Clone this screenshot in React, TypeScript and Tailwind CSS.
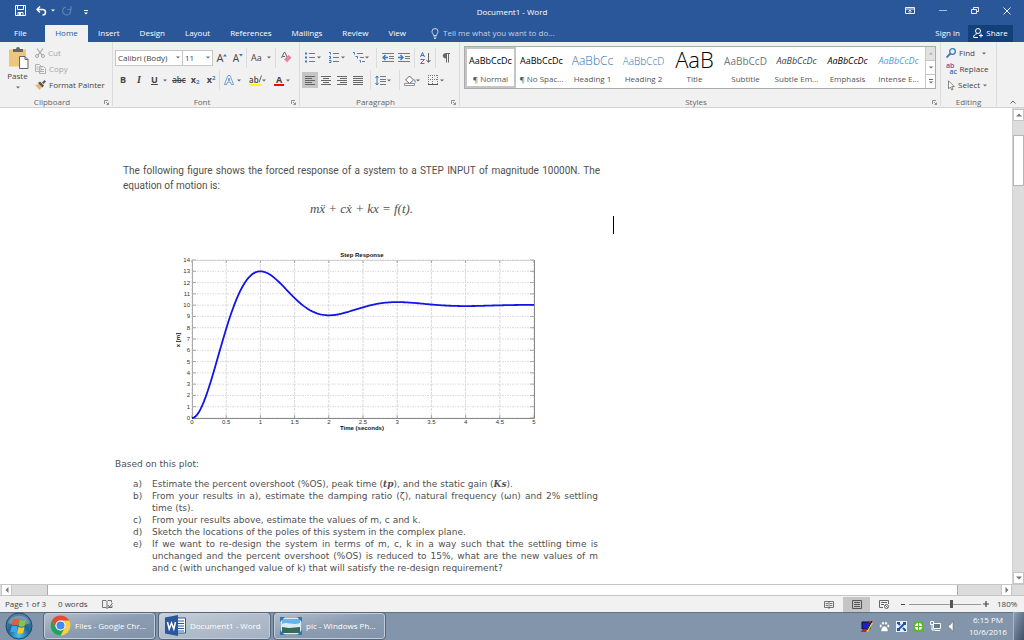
import type { ReactNode } from "react";

interface IconProps {
  w: number;
  h: number;
  children: ReactNode;
}

function Icon({ w, h, children }: IconProps) {
  return (
    <svg width={w} height={h} viewBox={`0 0 ${w} ${h}`} fill="none" className="shrink-0" aria-hidden="true">
      {children}
    </svg>
  );
}

function Caret() {
  return (
    <Icon w={4} h={3}>
      <path d="M0 0.5h4L2 2.5z" fill="#666" />
    </Icon>
  );
}

function Divider() {
  return <span className="h-5 w-px shrink-0 bg-[#dcdcdc]" />;
}

interface ToolProps {
  label: string;
  className: string;
  caret?: boolean;
  children: ReactNode;
}

function Tool({ label, className, caret, children }: ToolProps) {
  return (
    <button
      aria-label={label}
      className={`flex h-4 shrink-0 items-center hover:bg-[#d5d5d5] ${
        caret ? "justify-between px-1" : "justify-center"
      } ${className}`}
    >
      {children}
      {caret && <Caret />}
    </button>
  );
}

interface GroupProps {
  title: string;
  className: string;
  launcher?: boolean;
  children: ReactNode;
}

function Group({ title, className, launcher, children }: GroupProps) {
  return (
    <section className={`flex flex-col border-r border-[#dcdcdc] ${className}`}>
      <div className="flex-1">{children}</div>
      <div className="flex h-2 items-center text-[#666]">
        <span className="flex-1 text-center">{title}</span>
        {launcher && (
          <button aria-label={`${title} settings`} className="mr-[3px]">
            <Icon w={5} h={5}>
              <path d="M0.5 4V0.5H4M2 2l2.500 2.500M4.500 2.500v2h-2" stroke="#777" strokeWidth="0.8" />
            </Icon>
          </button>
        )}
      </div>
    </section>
  );
}

function TitleBar() {
  return (
    <div className="grid h-[25px] grid-cols-[1fr_auto_1fr] items-center">
      <div className="flex items-center pb-1 pl-[15px]">
        <button aria-label="Save">
          <Icon w={11} h={11}>
            <path d="M0.500 0.500h10v10h-10zM2.500 0.500v4h6v-4M3 10.500v-3h5v3" stroke="#fff" />
            <path d="M4 8h2v2.500H4z" fill="#fff" />
          </Icon>
        </button>
        <button aria-label="Undo" className="ml-[10px] flex items-center gap-1">
          <Icon w={11} h={10}>
            <path d="M1 3.500h5.500c4 0 4 5.500 0 5.500M4 0.500l-3 3 3 3" stroke="#fff" strokeWidth="1.500" />
          </Icon>
          <Icon w={4} h={3}>
            <path d="M0 0.500h4l-2 2z" fill="#fff" />
          </Icon>
        </button>
        <button aria-label="Redo" className="ml-[7px]">
          <Icon w={10} h={10}>
            <path d="M4 1A4 4 0 1 0 8.500 4M5.500 3.500h3.500V0" stroke="#5d80b6" strokeWidth="1.200" />
          </Icon>
        </button>
        <button aria-label="Customize toolbar" className="ml-3 mt-1">
          <Icon w={4} h={5}>
            <path d="M0 0.500h4" stroke="#fff" />
            <path d="M0 2.500h4L2 4.500z" fill="#fff" />
          </Icon>
        </button>
      </div>
      <h1 className="pb-[2px] text-white">Document1 - Word</h1>
      <div className="flex items-center justify-end pb-1 pr-[13px]">
        <button aria-label="Ribbon display options" className="mr-6">
          <Icon w={10} h={7}>
            <path d="M0.500 0.500h9v6h-9zM0.500 2h9M5 6V3M3.500 4.500L5 3l1.500 1.500" stroke="#fff" strokeWidth="0.900" />
          </Icon>
        </button>
        <button aria-label="Minimize" className="mr-6">
          <Icon w={8} h={7}>
            <path d="M0 3.500h8" stroke="#a9bedb" />
          </Icon>
        </button>
        <button aria-label="Restore" className="mr-6">
          <Icon w={8} h={7}>
            <path d="M0.500 2.500h5v4h-5zM2.500 2V0.500h5v4H6" stroke="#fff" strokeWidth="0.900" />
          </Icon>
        </button>
        <button aria-label="Close">
          <Icon w={8} h={8}>
            <path d="M0.500 0.500l7 7M7.500 0.500l-7 7" stroke="#fff" strokeWidth="0.900" />
          </Icon>
        </button>
      </div>
    </div>
  );
}

const tabs = ["Insert", "Design", "Layout", "References", "Mailings", "Review", "View"];

function TabBar() {
  return (
    <nav className="flex h-[17px] items-stretch font-medium text-white">
      <button className="w-[45px] pb-px pl-[14px] text-left">File</button>
      <button className="w-[43px] bg-[#f1f1f1] pb-px text-[#2b579a]">Home</button>
      {tabs.map((tab) => (
        <button key={tab} className="px-[10px] pb-px">
          {tab}
        </button>
      ))}
      <label className="ml-[15px] flex flex-1 items-center gap-1 pb-px text-[#c3d0e5]">
        <Icon w={8} h={11}>
          <path d="M2.500 7.500C2.500 6 1 5.500 1 3.500a3 3 0 0 1 6 0C7 5.500 5.500 6 5.500 7.500zM2.500 9h3M3 10.500h2" stroke="#dbe4f1" strokeWidth="0.900" />
        </Icon>
        <input
          aria-label="Tell me"
          placeholder="Tell me what you want to do..."
          className="w-40 bg-transparent outline-none placeholder:text-[#c3d0e5]"
        />
      </label>
      <button className="px-2 pb-px">Sign in</button>
      <button className="mr-[11px] flex w-[45px] items-center justify-center gap-[3px] bg-[#124078] pb-px">
        <Icon w={10} h={10}>
          <circle cx="5" cy="3" r="2.500" stroke="#fff" />
          <path d="M0.500 9.500C0.500 7.500 2 6 4 5.700M1 9.500h4M8 5.500v4M6 7.500h4" stroke="#fff" />
        </Icon>
        Share
      </button>
    </nav>
  );
}

function ClipboardGroup() {
  return (
    <Group title="Clipboard" launcher className="w-[113px]">
      <div className="flex">
        <button className="flex w-[35px] flex-col items-center pt-[5px]">
          <Icon w={22} h={22}>
            <path d="M2 2.500h17v17H2z" fill="#ecc57f" />
            <path d="M6 5V2h3a2 2 0 0 1 4 0h3v3z" fill="#666" />
            <path d="M12.500 9.500h5.500l3 3v9h-8.500z" fill="#fff" stroke="#666" />
            <path d="M18 9.500v3h3" stroke="#666" />
          </Icon>
          <span className="mt-px leading-3">Paste</span>
          <span className="mt-1">
            <Caret />
          </span>
        </button>
        <div className="flex flex-col pt-[3px]">
          <button className="flex h-4 items-center gap-[3px] text-[#a6a6a6]">
            <Icon w={10} h={10}>
              <path d="M2 0.500l5 6.500M8 0.500L3 7" stroke="#a6a6a6" strokeWidth="1.200" />
              <circle cx="2" cy="8" r="1.500" stroke="#a6a6a6" />
              <circle cx="8" cy="8" r="1.500" stroke="#a6a6a6" />
            </Icon>
            Cut
          </button>
          <button className="flex h-4 items-center gap-[3px] text-[#a6a6a6]">
            <Icon w={11} h={10}>
              <path d="M0.500 0.500h4l1.500 1.500v5.500H0.500zM4.500 2.500h4L10.500 4.500v5h-6z" fill="#f1f1f1" stroke="#b1b1b1" />
              <path d="M1.500 3h2M1.500 5h2M6 5.500h3M6 7.500h3" stroke="#b1b1b1" />
            </Icon>
            Copy
          </button>
          <button className="flex h-4 items-center gap-[3px]">
            <Icon w={11} h={10}>
              <path d="M0 5l4-1 3 3-2.500 3z" fill="#ecb66c" />
              <path d="M3 3l2-1.500 4 4L7.500 7.500zM7 2.500L9.500 0 11 1.500 8.500 4z" fill="#555" />
            </Icon>
            Format Painter
          </button>
        </div>
      </div>
    </Group>
  );
}

function FontGroup() {
  return (
    <Group title="Font" launcher className="w-[187px]">
      <div className="flex h-7 items-center pl-[2px] pt-[3px]">
        <label className="flex h-4 w-[68px] items-center border border-[#c6c6c6] bg-white px-[2px]">
          <select aria-label="Font" className="min-w-0 flex-1 appearance-none bg-transparent outline-none">
            <option>Calibri (Body)</option>
          </select>
          <Caret />
        </label>
        <label className="flex h-4 w-[30px] items-center border border-l-0 border-[#c6c6c6] bg-white px-[2px]">
          <select aria-label="Font size" className="min-w-0 flex-1 appearance-none bg-transparent outline-none">
            <option>11</option>
          </select>
          <Caret />
        </label>
        <Tool label="Grow font" className="ml-px w-4 text-[11px]">
          A
          <Icon w={4} h={10}>
            <path d="M0 3.500h4L2 1z" fill="#3b78bd" />
          </Icon>
        </Tool>
        <Tool label="Shrink font" className="w-4 text-[10px]">
          A
          <Icon w={4} h={10}>
            <path d="M0 1h4L2 3.500z" fill="#3b78bd" />
          </Icon>
        </Tool>
        <Divider />
        <Tool label="Change case" caret className="w-7 text-[9px]">
          Aa
        </Tool>
        <Divider />
        <Tool label="Clear formatting" className="w-5">
          <Icon w={11} h={11}>
            <path d="M0.500 6L3 0.500h1L6 5M1.500 4.500H4" stroke="#666" />
            <path d="M3 7.500L7.500 3l3 2.500L6 10.500z" fill="#e6819a" />
            <path d="M3 7.500l3 3" stroke="#f7cdd7" />
          </Icon>
        </Tool>
      </div>
      <div className="flex h-5 items-center pl-[2px]">
        <Tool label="Bold" className="w-4 text-[9px] font-bold">
          B
        </Tool>
        <Tool label="Italic" className="w-4 font-['Liberation_Serif',serif] text-[10px] font-bold italic">
          I
        </Tool>
        <Tool label="Underline" className="w-6 text-[9px]" caret>
          <span className="font-bold underline">U</span>
        </Tool>
        <Tool label="Strikethrough" className="w-4 font-semibold line-through">
          abc
        </Tool>
        <Tool label="Subscript" className="w-4 text-[9px] font-bold">
          x<span className="mt-1 text-[6px] text-[#3b78bd]">2</span>
        </Tool>
        <Tool label="Superscript" className="w-4 text-[9px] font-bold">
          x<span className="mb-1 text-[6px] text-[#3b78bd]">2</span>
        </Tool>
        <Divider />
        <Tool label="Text effects" caret className="w-[25px]">
          <Icon w={10} h={10}>
            <path d="M0.500 9.500L4 0.500h2l3.500 9h-2L6.500 7h-3l-1 2.500zM4.200 5.500h1.600L5 3z" fill="#fff" stroke="#5c93cf" strokeWidth="0.900" />
          </Icon>
        </Tool>
        <Tool label="Highlight" caret className="w-[25px]">
          <span className="flex border-b-2 border-[#ffff00] font-semibold leading-[9px]">
            ab
            <Icon w={3} h={8}>
              <path d="M2.500 0.500L0 7.500" stroke="#666" />
            </Icon>
          </span>
        </Tool>
        <Tool label="Font color" caret className="w-6">
          <span className="border-b-2 border-[#f00] px-[2px] text-[9px] font-bold leading-[9px]">A</span>
        </Tool>
      </div>
    </Group>
  );
}

function AlignIcon({ d }: { d: string }) {
  return (
    <Icon w={10} h={9}>
      <path d={d} stroke="#666" />
    </Icon>
  );
}

function ParagraphGroup() {
  return (
    <Group title="Paragraph" launcher className="w-[160px]">
      <div className="flex h-7 items-center pl-[1px] pt-[3px]">
        <Tool label="Bullets" caret className="w-6">
          <Icon w={10} h={11}>
            <path d="M0 1.500h2M0 5.500h2M0 9.500h2" stroke="#3b78bd" strokeWidth="2" />
            <path d="M4 1.500h6M4 5.500h6M4 9.500h6" stroke="#777" />
          </Icon>
        </Tool>
        <Tool label="Numbering" caret className="w-6">
          <Icon w={10} h={11}>
            <path d="M0 0.500h1.500v2M0 4.500h1.500v2H0M0 8.500h2v2H0" stroke="#3b78bd" />
            <path d="M4 1.500h6M4 5.500h6M4 9.500h6" stroke="#777" />
          </Icon>
        </Tool>
        <Tool label="Multilevel list" caret className="w-6">
          <Icon w={12} h={11}>
            <path d="M0 0.500h1.500v2M2.500 4.500h2v2M6.500 8.500h1v2" stroke="#3b78bd" />
            <path d="M4 1.500h6M7 5.500h4M9 9.500h3" stroke="#777" />
          </Icon>
        </Tool>
        <span className="w-[3px]" />
        <Divider />
        <Tool label="Decrease indent" className="ml-[3px] w-4">
          <Icon w={12} h={9}>
            <path d="M0 0.500h12M7 3.500h5M7 5.500h5M0 8.500h12" stroke="#777" />
            <path d="M6 4.500H1M3.500 2L1 4.500 3.500 7" stroke="#3b78bd" strokeWidth="1.400" />
          </Icon>
        </Tool>
        <Tool label="Increase indent" className="w-4">
          <Icon w={12} h={9}>
            <path d="M0 0.500h12M7 3.500h5M7 5.500h5M0 8.500h12" stroke="#777" />
            <path d="M0 4.500h5M2.500 2L5 4.500 2.500 7" stroke="#3b78bd" strokeWidth="1.400" />
          </Icon>
        </Tool>
        <span className="w-[2px]" />
        <Divider />
        <Tool label="Sort" className="w-5">
          <Icon w={11} h={12}>
            <path d="M0.500 5L2.500 0.500 4.500 5M1 3.500h3" stroke="#3b78bd" />
            <path d="M0.500 7.500h4l-4 4h4" stroke="#8b5ba6" />
            <path d="M8.500 1v9M6.500 8l2 2.500 2-2.500" stroke="#666" />
          </Icon>
        </Tool>
        <Divider />
        <Tool label="Show marks" className="w-5">
          <Icon w={8} h={10}>
            <path d="M4 0.500h4M4.500 0.500v9M6.500 0.500v9" stroke="#666" />
            <path d="M4.500 0C-0.500 0-0.500 5.500 4.500 5.500z" fill="#666" />
          </Icon>
        </Tool>
      </div>
      <div className="flex h-5 items-center pl-[2px]">
        <button aria-label="Align left" className="flex size-4 items-center justify-center bg-[#c5c5c5]">
          <AlignIcon d="M0 0.500h10M0 2.500h7M0 4.500h10M0 6.500h7M0 8.500h10" />
        </button>
        <Tool label="Center" className="w-4">
          <AlignIcon d="M0 0.500h10M2 2.500h6M0 4.500h10M2 6.500h6M0 8.500h10" />
        </Tool>
        <Tool label="Align right" className="w-4">
          <AlignIcon d="M0 0.500h10M3 2.500h7M0 4.500h10M3 6.500h7M0 8.500h10" />
        </Tool>
        <Tool label="Justify" className="w-4">
          <AlignIcon d="M0 0.500h10M0 2.500h10M0 4.500h10M0 6.500h10M0 8.500h10" />
        </Tool>
        <span className="w-1" />
        <Divider />
        <Tool label="Line spacing" caret className="w-6">
          <Icon w={11} h={11}>
            <path d="M2 1v9M0.500 3L2 1l1.500 2M0.500 8L2 10l1.500-2" stroke="#3b78bd" />
            <path d="M5 1.500h6M5 4.500h6M5 6.500h6M5 9.500h6" stroke="#777" />
          </Icon>
        </Tool>
        <span className="w-1" />
        <Divider />
        <Tool label="Shading" caret className="w-6">
          <Icon w={12} h={11}>
            <path d="M1.500 5L5.500 1l4 4-4 3.500z" fill="#fff" stroke="#666" />
            <path d="M10 4c2 1.500 2 3 1 4z" fill="#3b78bd" />
            <path d="M0.500 8.500h10v2h-10z" fill="#fff" stroke="#777" strokeWidth="0.800" />
          </Icon>
        </Tool>
        <Tool label="Borders" caret className="w-6">
          <Icon w={10} h={10}>
            <path d="M0 0.500h10M0.500 0v9M9.500 0v9M4.500 0v9M0 4.500h10" stroke="#777" strokeDasharray="1 1" />
            <path d="M0 9.500h10" stroke="#555" />
          </Icon>
        </Tool>
      </div>
    </Group>
  );
}

const styles = [
  { name: "¶ Normal", sample: "AaBbCcDc", look: "text-[9px] text-black" },
  { name: "¶ No Spac...", sample: "AaBbCcDc", look: "text-[9px] text-black" },
  { name: "Heading 1", sample: "AaBbCc", look: "text-[12px] font-light text-[#2e74b5]" },
  { name: "Heading 2", sample: "AaBbCcD", look: "text-[10px] font-light text-[#2e74b5]" },
  { name: "Title", sample: "AaB", look: "pb-1 text-[22px] font-light text-black" },
  { name: "Subtitle", sample: "AaBbCcD", look: "text-[10px] text-[#767676]" },
  { name: "Subtle Em...", sample: "AaBbCcDc", look: "text-[9px] italic text-[#404040]" },
  { name: "Emphasis", sample: "AaBbCcDc", look: "text-[9px] italic text-black" },
  { name: "Intense E...", sample: "AaBbCcDc", look: "text-[9px] italic text-[#5b9bd5]" },
];

function StylesGroup() {
  return (
    <Group title="Styles" launcher className="min-w-0 flex-1">
      <div className="mx-1 mt-1 flex h-[43px] border border-[#ababab] bg-white">
        <div className="flex min-w-0 flex-1 overflow-hidden">
          {styles.map((style, i) => (
            <button
              key={style.name}
              className={`flex w-[51px] shrink-0 flex-col items-center border-2 ${
                i === 0 ? "border-[#c5c5c5]" : "border-transparent"
              }`}
            >
              <span className={`flex h-6 items-center whitespace-nowrap ${style.look}`}>{style.sample}</span>
              <span className="whitespace-nowrap leading-3 text-[#555]">{style.name}</span>
            </button>
          ))}
        </div>
        <div className="flex w-[10px] flex-col divide-y divide-[#c6c6c6] border-l border-[#c6c6c6]">
          <button aria-label="Previous styles" className="flex flex-1 items-center justify-center bg-[#e1e1e1]">
            <Icon w={4} h={3}>
              <path d="M0 2.500h4L2 0.500z" fill="#aaa" />
            </Icon>
          </button>
          <button aria-label="Next styles" className="flex flex-1 items-center justify-center">
            <Caret />
          </button>
          <button aria-label="More styles" className="flex flex-1 flex-col items-center justify-center gap-px">
            <span className="h-px w-1 bg-[#666]" />
            <Caret />
          </button>
        </div>
      </div>
    </Group>
  );
}

function EditingGroup() {
  return (
    <Group title="Editing" className="w-14">
      <div className="flex flex-col pl-[5px] pt-[3px]">
        <button className="flex h-4 items-center gap-[3px]">
          <Icon w={10} h={10}>
            <circle cx="6.500" cy="3.500" r="2.800" stroke="#3b78bd" strokeWidth="1.300" />
            <path d="M4.500 5.500L0.500 9.500" stroke="#3b78bd" strokeWidth="1.800" />
          </Icon>
          Find
          <span className="ml-1">
            <Caret />
          </span>
        </button>
        <button className="flex h-4 items-center gap-[2px]">
          <span className="flex flex-col text-[7px] font-semibold leading-[6px]">
            <span className="pr-[3px] text-[#7a4a94]">ab</span>
            <span className="pl-[3px] text-[#3b6fae]">ac</span>
          </span>
          Replace
        </button>
        <button className="flex h-4 items-center gap-[3px]">
          <Icon w={9} h={11}>
            <path d="M2.500 0.800v8l2-1.800 1.300 3 1.200-0.600L5.800 6.600h2.500z" fill="#fff" stroke="#777" strokeWidth="0.900" />
          </Icon>
          Select
          <Caret />
        </button>
      </div>
    </Group>
  );
}

function Ribbon() {
  return (
    <div className="flex h-[66px] border-b border-[#d2d2d2] bg-[#f1f1f1] pb-[1px] font-medium text-[#444]">
      <ClipboardGroup />
      <FontGroup />
      <ParagraphGroup />
      <StylesGroup />
      <EditingGroup />
      <button aria-label="Collapse ribbon" className="flex w-[27px] items-end justify-end pb-[2px] pr-2">
        <Icon w={6} h={4}>
          <path d="M0.500 3.500L3 1l2.500 2.500" stroke="#666" />
        </Icon>
      </button>
    </div>
  );
}

const plot = { left: 16, top: 10, width: 342, height: 158 };
const xAt = (t: number) => plot.left + (t / 5) * plot.width;
const yAt = (v: number) => plot.top + plot.height - (v / 14) * plot.height;

// underdamped second order response, 30% overshoot with the peak at 1 s
const sigma = 1.204;
const curve = Array.from({ length: 201 }, (_, i) => {
  const t = i / 40;
  const w = Math.PI;
  const v = 10 * (1 - Math.exp(-sigma * t) * (Math.cos(w * t) + (sigma / w) * Math.sin(w * t)));
  return `${xAt(t).toFixed(2)},${yAt(v).toFixed(2)}`;
}).join(" ");

function StepChart() {
  const xTicks = [0, 0.5, 1, 1.5, 2, 2.5, 3, 3.5, 4, 4.5, 5];
  const yTicks = Array.from({ length: 15 }, (_, i) => i);
  return (
    <svg width="366" height="184" viewBox="0 0 366 184" className="font-['Liberation_Sans',sans-serif]" fill="#333" fontSize="6">
      {yTicks.map((v) => (
        <g key={v}>
          <line x1={plot.left} x2={plot.left + plot.width} y1={yAt(v)} y2={yAt(v)} stroke="#d2d2d2" strokeWidth="0.8" strokeDasharray="2 1 1 1" />
          <path d={`M${plot.left} ${yAt(v)}h4M${plot.left + plot.width} ${yAt(v)}h-4`} stroke="#888" strokeWidth="0.7" />
          <text x={plot.left - 2} y={yAt(v) + 2} textAnchor="end">
            {v}
          </text>
        </g>
      ))}
      {xTicks.map((t) => (
        <g key={t}>
          <line x1={xAt(t)} x2={xAt(t)} y1={plot.top} y2={plot.top + plot.height} stroke="#cfcfcf" strokeWidth="0.8" strokeDasharray="3 1" />
          <path d={`M${xAt(t)} ${plot.top}v3M${xAt(t)} ${plot.top + plot.height}v-3`} stroke="#888" strokeWidth="0.7" />
          <text x={xAt(t)} y={plot.top + plot.height + 6} textAnchor="middle">
            {t}
          </text>
        </g>
      ))}
      <path d="M16 10.500h342" stroke="#ccc" strokeWidth="0.8" />
      <path d="M16.500 10v158" stroke="#aaa" />
      <path d="M16 168.500h342.500V10" fill="none" stroke="#888" />
      <polyline points={curve} fill="none" stroke="#1414e6" strokeWidth="1.800" />
      <g fontWeight="bold" fill="#111" textAnchor="middle">
        <text x="186" y="7">Step Response</text>
        <text x="186" y="180">Time (seconds)</text>
        <text transform="translate(4 90) rotate(-90)">x [m]</text>
      </g>
    </svg>
  );
}

function Var({ children }: { children: ReactNode }) {
  return <i className="font-['DejaVu_Serif',serif] font-bold">{children}</i>;
}

const questions: ReactNode[] = [
  <>
    Estimate the percent overshoot (%OS), peak time (<Var>tp</Var>), and the static gain (<Var>Ks</Var>).
  </>,
  "From your results in a), estimate the damping ratio (ζ), natural frequency (ωn) and 2% settling time (ts).",
  "From your results above, estimate the values of m, c and k.",
  "Sketch the locations of the poles of this system in the complex plane.",
  "If we want to re-design the system in terms of m, c, k in a way such that the settling time is unchanged and the percent overshoot (%OS) is reduced to 15%, what are the new values of m and c (with unchanged value of k) that will satisfy the re-design requirement?",
];

function Document() {
  return (
    <main className="flex flex-1 bg-white">
      <article className="ml-[115px] w-[485px] pt-[55px] text-[#505050]">
        <p className="pl-2 text-justify font-['Roboto',sans-serif] text-[10px] leading-[15px]">
          The following figure shows the forced response of a system to a STEP INPUT of magnitude 10000N. The equation
          of motion is:
        </p>
        <p className="mt-2 pl-2 text-center font-['Liberation_Serif',serif] text-[13px] italic leading-[15px]">
          mẍ + cẋ + kx = f(t).
        </p>
        <div className="ml-[61px] mt-[34px]">
          <StepChart />
        </div>
        <div className="mt-6 pr-[2px] font-['DejaVu_Sans',sans-serif] text-[9px] leading-3">
          <p>Based on this plot:</p>
          <ol className="mt-2 text-justify">
            {questions.map((question, i) => (
              <li key={i} className="flex">
                <span className="w-[37px] shrink-0 pl-[18px]">{"abcde"[i]})</span>
                <span className="flex-1">{question}</span>
              </li>
            ))}
          </ol>
        </div>
      </article>
      <span className="ml-[13px] mt-[108px] h-[18px] w-px bg-black" />
      <div className="ml-auto flex w-3 flex-col border-l border-[#d0d0d0] bg-[#dcdcdc] pt-px">
        <button aria-label="Scroll up" className="flex h-3 items-center justify-center border border-[#c6c6c6] bg-white">
          <Icon w={6} h={4}>
            <path d="M0 3.500h6L3 0.500z" fill="#777" />
          </Icon>
        </button>
        <div className="mt-[14px] h-[51px] border border-[#b5b5b5] bg-white" />
        <button aria-label="Scroll down" className="mt-auto flex h-3 items-center justify-center border border-[#c6c6c6] bg-white">
          <Icon w={6} h={4}>
            <path d="M0 0.500h6L3 3.500z" fill="#777" />
          </Icon>
        </button>
      </div>
    </main>
  );
}

function HorizontalScroll() {
  return (
    <div className="flex h-3 border-y border-[#c6c6c6] bg-[#dcdcdc] pr-3">
      <button aria-label="Scroll left" className="ml-px flex w-[11px] items-center justify-center border-x border-[#c6c6c6] bg-white">
        <Icon w={4} h={6}>
          <path d="M3.500 0v6L0.500 3z" fill="#777" />
        </Icon>
      </button>
      <div className="ml-[35px] mr-[43px] flex-1 border-x border-[#ababab] bg-white" />
      <button aria-label="Scroll right" className="flex w-[11px] items-center justify-center border-x border-[#c6c6c6] bg-white">
        <Icon w={4} h={6}>
          <path d="M0.500 0v6L3.500 3z" fill="#777" />
        </Icon>
      </button>
    </div>
  );
}

function StatusBar() {
  return (
    <footer className="flex h-4 items-center bg-[#f1f1f1] pl-[5px] font-medium text-[#444]">
      <span>Page 1 of 3</span>
      <span className="ml-3">0 words</span>
      <button aria-label="Proofing" className="ml-[14px]">
        <Icon w={11} h={9}>
          <path d="M5 1.500L4 0.500H0.500v7H4l1 1 1-1h1M5 1.500v7M5 1.500l1-1h3.500v2" stroke="#666" strokeWidth="0.900" />
          <path d="M6 5l1.500 2L10.500 3M7 7.500h3v-2" stroke="#666" />
        </Icon>
      </button>
      <button aria-label="Read mode" className="ml-auto mr-[9px]">
        <Icon w={10} h={9}>
          <path d="M5 1v8M0.500 1.500h9v6h-9zM1.500 3.500H4M1.500 5.500H4M6 3.500h2.500M6 5.500h2.500" stroke="#666" strokeWidth="0.900" />
        </Icon>
      </button>
      <button aria-label="Print layout" className="flex h-[15px] w-[27px] items-center justify-center bg-[#c5c5c5]">
        <Icon w={10} h={9}>
          <path d="M0.500 0.500h9v8h-9zM2 2.500h6M2 4.500h6M2 6.500h6" stroke="#555" />
        </Icon>
      </button>
      <button aria-label="Web layout" className="ml-[9px]">
        <Icon w={10} h={9}>
          <path d="M9.500 4V0.500h-9v7H4M2 2.500h6M2 4.500h3" stroke="#666" />
          <circle cx="7.500" cy="6.500" r="2" stroke="#666" />
          <path d="M6 5l3 3" stroke="#666" />
        </Icon>
      </button>
      <button aria-label="Zoom out" className="ml-3 mr-[3px]">
        <Icon w={5} h={5}>
          <path d="M0 2.500h4" stroke="#444" />
        </Icon>
      </button>
      <input
        type="range"
        aria-label="Zoom"
        defaultValue={60}
        className="h-2 w-[72px] appearance-none bg-transparent [&::-webkit-slider-runnable-track]:h-px [&::-webkit-slider-runnable-track]:bg-[#999] [&::-webkit-slider-thumb]:-mt-1 [&::-webkit-slider-thumb]:h-2 [&::-webkit-slider-thumb]:w-[3px] [&::-webkit-slider-thumb]:appearance-none [&::-webkit-slider-thumb]:bg-[#555]"
      />
      <button aria-label="Zoom in" className="ml-[2px]">
        <Icon w={6} h={6}>
          <path d="M0 3h6M3 0v6" stroke="#444" strokeWidth="1.200" />
        </Icon>
      </button>
      <span className="ml-2 mr-[7px] w-5 text-right">180%</span>
    </footer>
  );
}

interface TaskProps {
  label: string;
  active?: boolean;
  children: ReactNode;
}

function Task({ label, active, children }: TaskProps) {
  return (
    <button
      className={`flex h-7 w-[113px] items-center gap-1 rounded-sm border border-[#55657a] px-[6px] pb-px font-medium text-white shadow-[inset_0_0_0_1px_#c3ccd8] ${
        active
          ? "bg-gradient-to-br from-[#c9d2dd] via-[#b0bcca] to-[#a3b1c2]"
          : "bg-gradient-to-br from-[#b5c0ce] via-[#8c9db1] to-[#8193a9]"
      }`}
    >
      {children}
      <span className="whitespace-nowrap">{label}</span>
    </button>
  );
}

function Taskbar() {
  return (
    <div className="flex h-7 items-center bg-[#8295ab] shadow-[inset_0_1px_0_#5f7087]">
      <button aria-label="Start" className="ml-[5px] mr-[10px]">
        <Icon w={28} h={28}>
          <defs>
            <radialGradient id="orb" cx="0.5" cy="0.85" r="0.8">
              <stop offset="0" stopColor="#4ec6ee" />
              <stop offset="0.5" stopColor="#1d659a" />
              <stop offset="1" stopColor="#5b7f9f" />
            </radialGradient>
          </defs>
          <circle cx="14" cy="14" r="13" fill="url(#orb)" stroke="#27486a" />
          <path d="M3 11a12 12 0 0 1 22 0c-6 3-15 3-22 0z" fill="#fff" opacity="0.25" />
          <path d="M8 7.500c2-1.200 4-1 6 0l-1.200 6c-2-1-3.800-1.100-6 0z" fill="#ed5b2a" />
          <path d="M15 8c2 1 4 1 6 0l-1.300 6c-2 1-4 0.900-6 0z" fill="#8bc53f" />
          <path d="M6.500 14.500c2-1.200 4-1 6 0l-1.200 6c-2-1-3.800-1.100-6 0z" fill="#3ba9e8" />
          <path d="M13.500 15c2 1 4 1 6 0l-1.300 6c-2 1-4 0.900-6 0z" fill="#fbc92b" />
        </Icon>
      </button>
      <div className="flex gap-[2px]">
        <Task label="Files - Google Chr...">
          <Icon w={21} h={21}>
            <circle cx="10.500" cy="10.500" r="10" fill="#fbd044" />
            <path d="M1.840 5.500A10 10 0 0 1 19.160 5.500H10.500A5 5 0 0 0 6 8.500L5.500 12z" fill="#df4a3c" />
            <path d="M1.840 5.500A10 10 0 0 0 10.500 20.500l4.330-7.500A5 5 0 0 1 6.170 13z" fill="#1ea362" />
            <circle cx="10.500" cy="10.500" r="5" fill="#fff" />
            <circle cx="10.500" cy="10.500" r="4" fill="#4687f4" />
          </Icon>
        </Task>
        <Task label="Document1 - Word" active>
          <Icon w={21} h={21}>
            <path d="M11 3h9.500v15H11z" fill="#fff" stroke="#2b579a" />
            <path d="M13 6h6M13 8.500h6M13 11h6M13 13.500h6M13 16h6" stroke="#2b579a" />
            <path d="M0 2.500L13 0v21L0 18.500z" fill="#2b579a" />
            <path d="M2.500 7l1.700 7L6.500 8l2.300 6 1.700-7" stroke="#fff" strokeWidth="1.500" />
          </Icon>
        </Task>
        <Task label="pic - Windows Ph...">
          <Icon w={22} h={18}>
            <path d="M1 1h20v16H1z" fill="#d9ecf7" />
            <path d="M2 2h18v8H2z" fill="#6bb3e4" />
            <path d="M2 7c5-3 11 2 18-1v5H2z" fill="#d9edf8" />
            <path d="M2 10l7 1 11-1v6H2z" fill="#356b58" />
            <path d="M0 0h5L0 5zM22 0h-5l5 5zM0 18h5l-5-5zM22 18h-5l5-5z" fill="#2e76b8" />
          </Icon>
        </Task>
      </div>
      <div className="ml-auto flex items-center gap-[6px]">
        <Icon w={12} h={12}>
          <path d="M1 2h8v7H1z" fill="#1a1fd1" stroke="#111" />
          <path d="M5 11l5-9 2 1-5 9z" fill="#e9cf35" />
          <path d="M1 10h5l-1 2H0zM8 1h3v2H8z" fill="#c92222" />
          <path d="M6 10l5-9" stroke="#111" />
        </Icon>
        <Icon w={11} h={11}>
          <g fill="#fff" stroke="#677" strokeWidth="0.400">
            <ellipse cx="1.700" cy="5" rx="1.300" ry="1.700" />
            <ellipse cx="4" cy="2.200" rx="1.300" ry="1.800" />
            <ellipse cx="7" cy="2.200" rx="1.300" ry="1.800" />
            <ellipse cx="9.300" cy="5" rx="1.300" ry="1.700" />
            <path d="M5.500 5c2 0 3.500 3 3.500 4.500s-2 1-3.500 1-3.500 0.500-3.500-1S3.500 5 5.500 5z" />
          </g>
        </Icon>
        <Icon w={11} h={11}>
          <path d="M0 0h11v11H0z" fill="#e8f0fb" />
          <path d="M3 8l5-5M2 2l2 2M9 9L7 7" stroke="#1b56a8" strokeWidth="2" />
          <path d="M1 1h3v2H1zM7 1h3v3H7zM1 7h3v3H1zM8 8h2v2H8z" fill="#1b56a8" />
        </Icon>
        <Icon w={11} h={11}>
          <path d="M0 0h11v11H0z" fill="#5eb82b" />
          <circle cx="5.500" cy="5.500" r="3.500" fill="#fff" />
          <path d="M5.500 2v7M2 5.500h7" stroke="#5eb82b" />
        </Icon>
        <Icon w={12} h={11}>
          <path d="M3.500 2.500h7v5h-7zM5 9.500h5" fill="#65788f" stroke="#fff" />
          <path d="M0.500 0.500h3v3h-3zM2 4v5h3" stroke="#fff" />
        </Icon>
        <Icon w={9} h={11}>
          <path d="M2 4l3-3.500v10L2 7H0.500V4z" fill="#fff" stroke="#566" strokeWidth="0.500" />
        </Icon>
        <div className="w-[50px] text-center leading-3 text-white">
          <div>6:15 PM</div>
          <div>10/6/2016</div>
        </div>
        <button aria-label="Show desktop" className="-ml-[6px] h-7 w-[11px] border-l border-[#a9b7c7] bg-gradient-to-br from-[#8fa0b4] to-[#3e5068]" />
      </div>
    </div>
  );
}

export default function App() {
  return (
    <div className="flex min-h-screen flex-col bg-white font-['Open_Sans','Noto_Sans',sans-serif] text-[8px] leading-3">
      <header className="bg-[#2a579a]">
        <TitleBar />
        <TabBar />
        <Ribbon />
      </header>
      <Document />
      <HorizontalScroll />
      <StatusBar />
      <Taskbar />
    </div>
  );
}
